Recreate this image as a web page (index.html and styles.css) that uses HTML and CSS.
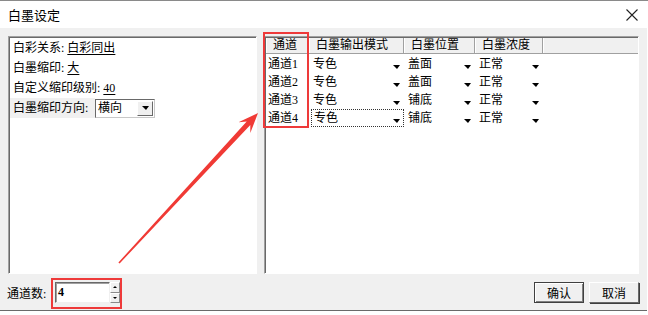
FILE: index.html
```html
<!DOCTYPE html>
<html lang="zh-CN">
<head>
    <meta charset="UTF-8">
    <title>白墨设定</title>
    <link rel="stylesheet" href="styles.css">
</head>
<body>
<div class="window">
    <div class="titlebar">
        <span class="title">白墨设定</span>
        <svg class="close" width="12" height="12" viewBox="0 0 12 12">
            <path d="M0.5 0.5 L11.5 11.5 M11.5 0.5 L0.5 11.5" stroke="#222" stroke-width="1.1" fill="none"/>
        </svg>
    </div>

    <div class="client">
        <div class="panels">
            <!-- options on the left -->
            <div class="panel options">
                <div class="line">白彩关系: <u>白彩同出</u></div>
                <div class="line">白墨缩印: <u>大</u></div>
                <div class="line">自定义缩印级别: <u>40</u></div>
                <div class="line">
                    <span class="label-box">白墨缩印方向:</span>
                    <span class="select">
                        <span class="select-text">横向</span>
                        <span class="drop"><i class="caret"></i></span>
                    </span>
                </div>
            </div>

            <!-- channel table -->
            <div class="panel grid">
                <div class="row head">
                    <div class="cell c1">通道</div>
                    <div class="cell c2">白墨输出模式</div>
                    <div class="cell c3">白墨位置</div>
                    <div class="cell c4">白墨浓度</div>
                    <div class="cell c5"></div>
                </div>
                <div class="row">
                    <div class="cell c1">通道1</div>
                    <div class="cell c2 combo"><span>专色</span><i class="caret"></i></div>
                    <div class="cell c3 combo"><span>盖面</span><i class="caret"></i></div>
                    <div class="cell c4 combo"><span>正常</span><i class="caret"></i></div>
                </div>
                <div class="row">
                    <div class="cell c1">通道2</div>
                    <div class="cell c2 combo"><span>专色</span><i class="caret"></i></div>
                    <div class="cell c3 combo"><span>盖面</span><i class="caret"></i></div>
                    <div class="cell c4 combo"><span>正常</span><i class="caret"></i></div>
                </div>
                <div class="row">
                    <div class="cell c1">通道3</div>
                    <div class="cell c2 combo"><span>专色</span><i class="caret"></i></div>
                    <div class="cell c3 combo"><span>铺底</span><i class="caret"></i></div>
                    <div class="cell c4 combo"><span>正常</span><i class="caret"></i></div>
                </div>
                <div class="row">
                    <div class="cell c1">通道4</div>
                    <div class="cell c2 combo focused"><span>专色</span><i class="caret"></i></div>
                    <div class="cell c3 combo"><span>铺底</span><i class="caret"></i></div>
                    <div class="cell c4 combo"><span>正常</span><i class="caret"></i></div>
                </div>
            </div>
        </div>

        <div class="footer">
            <span class="count-label">通道数:</span>
            <span class="spin">
                <span class="spin-text">4</span>
                <span class="spin-btns">
                    <span class="spin-up"></span>
                    <span class="spin-down"></span>
                </span>
            </span>
            <span class="buttons">
                <button class="btn default">确认</button>
                <button class="btn">取消</button>
            </span>
        </div>
    </div>

    <!-- red annotations drawn over the dialog -->
    <div class="mark mark-col"></div>
    <div class="mark mark-count"></div>
    <svg class="arrow" width="648" height="315" viewBox="0 0 648 315">
        <polygon fill="#f03a35" points="258,113 250.3,133.1 250.3,125 119.6,263.5 118.4,262.5 246.7,121.6 238.5,122.2"/>
    </svg>
</div>
</body>
</html>
```

FILE: styles.css
```css
/* dialog frame */
body {
    margin: 0;
    background: #fff;
    font-family: "Liberation Serif", "Noto Sans CJK SC", serif;
    font-size: 12px;
    color: #000;
}

.window {
    position: relative;
    width: 648px;
    height: 315px;
    overflow: hidden;
}

.titlebar {
    height: 27px;
    border-top: 1px solid #8a8a8a;
    background: #fff;
    display: flex;
    align-items: center;
    justify-content: space-between;
    padding: 0 10px 0 8px;
}

.title {
    font-family: "Noto Sans CJK SC", sans-serif;
    font-size: 13px;
}

.client {
    height: 283px;
    background: #f0f0f0;
    border-bottom: 1px solid #6a6a6a;
    padding: 8px 8px 0 8px;
    box-sizing: border-box;
    margin-right: 1px;
}

.panels {
    display: flex;
    gap: 7px;
    height: 238px;
}

.panel {
    background: #fff;
    border: 1px solid;
    border-color: #a0a0a0 #fff #fff #a0a0a0;
    box-shadow: inset 1px 1px 0 #696969;
    box-sizing: border-box;
}

/* left options */
.options {
    width: 249px;
    padding: 1px 0 0 1px;
}

.line {
    height: 20px;
    line-height: 20px;
    padding-left: 3px;
    white-space: nowrap;
}

.line u {
    text-underline-offset: 2px;
}

.line:last-child {
    display: flex;
    align-items: center;
    padding-left: 0;
}

.label-box {
    background: #f0f0f0;
    padding-left: 3px;
    width: 82px;
    height: 20px;
}

.select {
    display: flex;
    align-items: center;
    justify-content: space-between;
    width: 60px;
    height: 19px;
    box-sizing: border-box;
    border: 1px solid;
    border-color: #696969 #c8c8c8 #c8c8c8 #696969;
    background: #fff;
    padding: 1px 1px 1px 2px;
    line-height: 15px;
}

.drop {
    width: 16px;
    height: 15px;
    box-sizing: border-box;
    background: #f0f0f0;
    border: 1px solid;
    border-color: #fff #696969 #696969 #fff;
    display: flex;
    align-items: center;
    justify-content: center;
}

.caret {
    display: inline-block;
    width: 0;
    height: 0;
    border-top: 4px solid #000;
    border-left: 4px solid transparent;
    border-right: 3px solid transparent;
}

/* channel table */
.grid {
    flex: 1;
    padding: 1px 0 0 1px;
}

.row {
    display: flex;
    height: 18px;
    line-height: 18px;
}

.row.head {
    height: 15px;
    line-height: 15px;
    background: #f0f0f0;
    border-bottom: 1px solid #a0a0a0;
    margin-bottom: 1px;
}

.cell {
    box-sizing: border-box;
    white-space: nowrap;
}

.head .cell {
    border-right: 1px solid #a0a0a0;
    box-shadow: inset 1px 0 0 #fff;
    padding-left: 7px;
}

.head .c5 {
    flex: 1;
    border-right: none;
}

.c1 { width: 43px; padding-left: 2px; }
.c2 { width: 95px; }
.c3 { width: 71px; }
.c4 { width: 68px; }

.combo {
    display: flex;
    align-items: center;
    justify-content: space-between;
    padding: 0 4px 0 4px;
}

.combo .caret {
    margin-top: 5px;
}

.focused {
    outline: 1px dotted #333;
    outline-offset: -1px;
    padding-left: 3px;
    margin-left: 2px;
    width: 93px;
}

/* bottom strip */
.footer {
    display: flex;
    align-items: center;
    height: 37px;
}

.count-label {
    margin-left: -1px;
    width: 48px;
}

.spin {
    display: flex;
    height: 21px;
}

.spin-text {
    width: 55px;
    box-sizing: border-box;
    border: 1px solid;
    border-color: #696969 #f0f0f0 #f0f0f0 #696969;
    box-shadow: inset 1px 1px 0 #a0a0a0;
    background: #fff;
    padding-left: 2px;
    line-height: 19px;
    font-weight: bold;
}

.spin-btns {
    width: 10px;
    display: flex;
    flex-direction: column;
    background: #f0f0f0;
}

.spin-up, .spin-down {
    flex: 1;
    position: relative;
    border: 1px solid;
    border-color: #fff #8a8a8a #8a8a8a #fff;
}

.spin-up::after, .spin-down::after {
    content: "";
    position: absolute;
    left: 2px;
    top: 3px;
    border-left: 2px solid transparent;
    border-right: 2px solid transparent;
}

.spin-up::after { border-bottom: 2px solid #000; }
.spin-down::after { border-top: 2px solid #000; }

.buttons {
    margin-left: auto;
    display: flex;
    gap: 5px;
}

.btn {
    width: 50px;
    height: 21px;
    padding: 0;
    font-family: "Noto Sans CJK SC", sans-serif;
    font-size: 12px;
    background: #f0f0f0;
    border: 1px solid;
    border-color: #fff #696969 #696969 #fff;
    box-shadow: 1px 1px 0 #404040;
}

.btn.default {
    border-color: #404040;
    box-shadow: inset 1px 1px 0 #fff, inset -1px -1px 0 #808080;
}

/* annotations */
.mark {
    position: absolute;
    border: 2px solid #ee3a3a;
}

.mark-col {
    left: 263px;
    top: 32px;
    width: 42px;
    height: 92px;
}

.mark-count {
    left: 51px;
    top: 278px;
    width: 67px;
    height: 27px;
}

.arrow {
    position: absolute;
    left: 0;
    top: 0;
}
```
